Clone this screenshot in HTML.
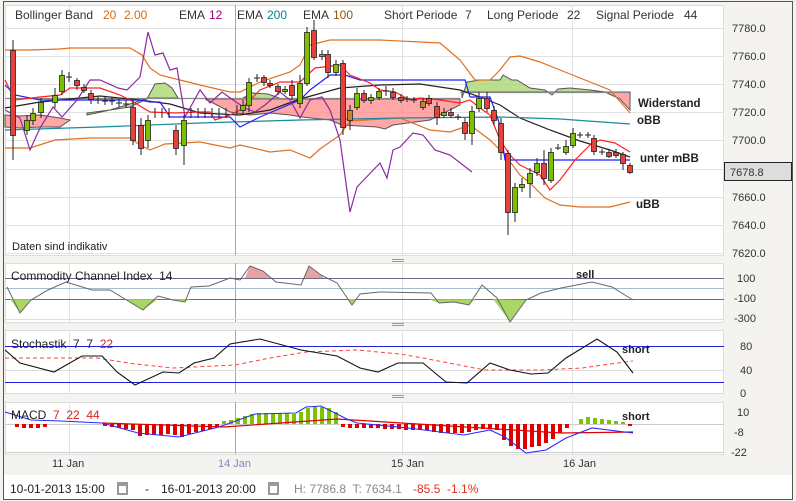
<!DOCTYPE html>
<html><head><meta charset="utf-8"><style>
html,body{margin:0;padding:0;background:#f4f3ef;}
svg{display:block;font-family:"Liberation Sans",sans-serif;}
text{white-space:pre;}
</style></head><body>
<svg width="796" height="501" viewBox="0 0 796 501" xmlns="http://www.w3.org/2000/svg">
<rect x="0" y="0" width="796" height="501" fill="#f4f3ef"/>
<rect x="3.5" y="1.5" width="789" height="498" fill="none" stroke="#555"/>
<rect x="5.5" y="5.5" width="718" height="250" fill="#fff" stroke="#ddd"/>
<rect x="5.5" y="263.5" width="718" height="59" fill="#fff" stroke="#ddd"/>
<rect x="5.5" y="330.5" width="718" height="63" fill="#fff" stroke="#ddd"/>
<rect x="5.5" y="402.5" width="718" height="52" fill="#fff" stroke="#ddd"/>
<g stroke="#999" stroke-width="1">
<path d="M392 259.5h12M392 261.5h12M392 323.5h12M392 325.5h12M392 395.5h12M392 397.5h12"/>
</g>
<g stroke="#e2e2e2" stroke-width="1">
<path d="M5 28.5H724M5 56.5H724M5 84.5H724M5 112.5H724M5 140.5H724M5 169.5H724M5 197.5H724M5 225.5H724M5 253.5H724"/>
<path d="M69.5 5V255M402.5 5V255M572.5 5V255M69.5 263V322M402.5 263V322M572.5 263V322M69.5 330V393M402.5 330V393M572.5 330V393M69.5 402V454M402.5 402V454M572.5 402V454"/>
</g>
<path d="M235.5 5V255M235.5 263V322M235.5 330V393M235.5 402V454" stroke="#9aa3d6"/>
<g font-size="12" fill="#333">
<text x="15" y="19">Bollinger Band</text><text x="103" y="19" fill="#d26a10">20</text><text x="124" y="19" fill="#d26a10">2.00</text>
<text x="179" y="19">EMA</text><text x="209" y="19" fill="#a0006e">12</text>
<text x="237" y="19">EMA</text><text x="267" y="19" fill="#00808a">200</text>
<text x="303" y="19">EMA</text><text x="333" y="19" fill="#8a5a10">100</text>
<text x="384" y="19">Short Periode</text><text x="465" y="19">7</text>
<text x="487" y="19">Long Periode</text><text x="567" y="19">22</text>
<text x="596" y="19">Signal Periode</text><text x="684" y="19">44</text>
</g>
<g font-size="11" fill="#333">
<text x="732" y="32">7780.0</text><text x="732" y="60">7760.0</text><text x="732" y="88">7740.0</text><text x="732" y="116">7720.0</text><text x="732" y="144">7700.0</text><text x="732" y="201">7660.0</text><text x="732" y="229">7640.0</text><text x="732" y="257">7620.0</text>
</g>
<rect x="724.5" y="162.5" width="67" height="18" fill="#ddd" stroke="#222"/>
<text x="730" y="176" font-size="11" fill="#333">7678.8</text>
<g fill-opacity="0.75" stroke="#555" stroke-width="1">
<polygon fill="#ff8a8a" points="5,115 20,116 40,115 60,118 70,120 60,127 40,127 20,128 5,127"/>
<polygon fill="#a6d46a" points="87,113 110,110 130,107 147,99 155,84 165,83 172,88 178,98 147,98 130,104 110,110 87,115"/>
<polygon fill="#a6d46a" points="243,98 252,93 268,94 282,99"/>
<polygon fill="#ff8a8a" points="205,99 460,99 460,105 430,120 393,125 385,129 377,127 342,125 330,120 302,117 290,115 270,113 250,115 230,112 215,104"/>
<polygon fill="#a6d46a" points="462,98 467,82 480,80 500,80 503,75 512,80 517,80 530,88 545,90 552,95 558,89 570,88 590,90 605,92 462,92"/>
<polygon fill="#ff8a8a" points="605,92 630,92 630,110 620,99"/>
</g>
<path d="M5 98.5H460M460 92.5H631" stroke="#888" stroke-width="1.3" fill="none"/>
<g fill="none" stroke-width="1.2">
<polyline stroke="#e07020" points="5,50 30,50 60,49 70,48 130,48 142,55 150,68 160,75 180,80 200,85 230,92 240,92 260,82 290,72 300,65 310,45 330,40 380,40 440,43 460,60 475,80 490,80 500,70 510,57 520,56 540,62 560,70 590,82 610,90 630,113"/>
<polyline stroke="#e07020" points="5,148 30,148 55,140 90,138 130,138 140,145 150,150 165,144 200,142 230,148 240,145 270,152 290,150 310,158 320,149 340,135 350,121 400,118 430,130 450,132 470,125 490,140 505,155 520,175 530,183 545,198 560,205 580,207 610,207 630,202"/>
<polyline stroke="#222" points="5,108 40,102 100,96 140,100 170,104 200,113 240,115 270,110 300,99 340,88 380,85 420,84 460,90 480,97 500,105 520,118 550,130 580,141 610,150 630,157"/>
<polyline stroke="#1a8a9a" points="5,130 100,127 200,123 300,120 400,118 500,117 560,119 630,124"/>
<polyline stroke="#1f1fff" points="5,85 15,95 40,100 140,100 150,102 160,102 170,117 230,117 240,127 260,117 300,100 310,90 330,75 345,75 360,80 465,80 470,97 490,97 500,125 505,160 630,160"/>
<polyline stroke="#ff2020" points="5,80 15,100 40,97 60,95 70,88 100,88 120,95 130,100 150,112 175,113 200,112 210,112 215,120 230,115 240,110 260,90 280,82 300,82 315,68 340,65 350,75 370,83 380,90 395,92 410,100 420,98 440,100 460,103 470,100 480,108 490,115 500,140 510,155 520,165 530,170 540,175 550,190 560,180 575,160 590,145 600,140 615,143 630,152"/>
<polyline stroke="#8a2aa0" points="5,110 20,118 30,150 40,128 53,107 62,117 77,100 90,80 100,80 118,88 127,90 140,77 148,32 155,55 163,53 170,70 177,68 185,117 200,90 210,103 222,92 233,100 245,108 255,112 265,105 280,92 290,100 300,118 310,100 322,97 330,110 340,140 350,212 357,187 380,163 387,178 393,150 400,147 413,133 423,135 435,150 450,155 472,172"/>
</g>
<g stroke="#222" stroke-width="1">
<path d="M13 40V160M27 115V135M33 108V125M41 98V118M55 88V108M62 70V95M69 72V82M77 78V90M84 84V93M91 90V104M98 97V104M105 97V105M112 97V105M119 99V107M126 100V108M133 100V145M141 118V155M148 115V148M155 108V118M162 108V118M169 108V118M176 125V155M184 115V165M191 108V118M198 108V118M205 108V118M212 108V118M219 108V118M226 108V118M237 105V115M243 100V114M249 78V112M257 74V82M264 75V86M270 80V88M278 84V95M285 86V94M292 80V100M300 75V108M307 27V86M314 20V60M322 50V60M328 50V78M336 60V76M343 60V135M350 105V130M357 88V110M364 90V103M371 94V104M379 88V100M386 86V96M393 88V100M401 94V103M407 96V102M414 97V103M423 98V110M429 95V106M437 102V125M444 108V118M451 108V118M458 114V120M465 118V140M472 106V145M479 92V112M487 92V112M494 106V125M501 118V160M508 150V235M515 183V222M522 178V192M530 168V198M537 158V176M544 150V185M551 148V183M558 144V150M566 140V155M573 128V148M580 132V138M588 132V138M594 135V155M602 149V155M609 149V158M616 149V158M623 152V170M630 163V174"/>
<path d="M66 77h6M95 100h6M102 101h6M109 101h6M116 103h6M123 104h6M254 78h6M383 91h6M404 99h6M411 100h6M455 117h6M555 148h6M577 135h6M585 135h6M599 152h6"/>
</g>
<g stroke="#222" stroke-width="0.8">
<g fill="#e8413c">
<rect x="10.5" y="50.5" width="5" height="85"/><rect x="74.5" y="80.5" width="5" height="5"/><rect x="81.5" y="87.5" width="5" height="3"/><rect x="88.5" y="93.5" width="5" height="6"/><rect x="130.5" y="107.5" width="5" height="33"/><rect x="138.5" y="125.5" width="5" height="23"/><rect x="173.5" y="130.5" width="5" height="18"/><rect x="261.5" y="77.5" width="5" height="5"/><rect x="267.5" y="83.5" width="5" height="2"/><rect x="275.5" y="86.5" width="5" height="5"/><rect x="289.5" y="85.5" width="5" height="10"/><rect x="311.5" y="30.5" width="5" height="27"/><rect x="325.5" y="54.5" width="5" height="18"/><rect x="340.5" y="63.5" width="5" height="64"/><rect x="361.5" y="93.5" width="5" height="7"/><rect x="390.5" y="92.5" width="5" height="5"/><rect x="398.5" y="97.5" width="5" height="3"/><rect x="426.5" y="98.5" width="5" height="5"/><rect x="434.5" y="106.5" width="5" height="11"/><rect x="448.5" y="112.5" width="5" height="3"/><rect x="462.5" y="122.5" width="5" height="11"/><rect x="484.5" y="98.5" width="5" height="10"/><rect x="491.5" y="110.5" width="5" height="10"/><rect x="498.5" y="123.5" width="5" height="29"/><rect x="505.5" y="153.5" width="5" height="59"/><rect x="541.5" y="163.5" width="5" height="15"/><rect x="591.5" y="138.5" width="5" height="13"/><rect x="606.5" y="152.5" width="5" height="4"/><rect x="613.5" y="152.5" width="5" height="3"/><rect x="620.5" y="154.5" width="5" height="9"/><rect x="627.5" y="165.5" width="5" height="7"/>
</g>
<g fill="#7cc000">
<rect x="24.5" y="120.5" width="5" height="10"/><rect x="30.5" y="113.5" width="5" height="7"/><rect x="38.5" y="102.5" width="5" height="10"/><rect x="52.5" y="95.5" width="5" height="7"/><rect x="59.5" y="75.5" width="5" height="16"/><rect x="145.5" y="120.5" width="5" height="20"/><rect x="181.5" y="120.5" width="5" height="25"/><rect x="240.5" y="105.5" width="5" height="5"/><rect x="246.5" y="82.5" width="5" height="23"/><rect x="282.5" y="89.5" width="5" height="2"/><rect x="297.5" y="83.5" width="5" height="20"/><rect x="304.5" y="32.5" width="5" height="51"/><rect x="319.5" y="54.5" width="5" height="2"/><rect x="333.5" y="64.5" width="5" height="8"/><rect x="354.5" y="93.5" width="5" height="14"/><rect x="368.5" y="97.5" width="5" height="3"/><rect x="376.5" y="91.5" width="5" height="6"/><rect x="441.5" y="112.5" width="5" height="3"/><rect x="469.5" y="111.5" width="5" height="22"/><rect x="476.5" y="98.5" width="5" height="10"/><rect x="512.5" y="187.5" width="5" height="25"/><rect x="519.5" y="184.5" width="5" height="3"/><rect x="527.5" y="173.5" width="5" height="10"/><rect x="534.5" y="163.5" width="5" height="9"/><rect x="548.5" y="152.5" width="5" height="28"/><rect x="563.5" y="146.5" width="5" height="6"/><rect x="570.5" y="133.5" width="5" height="12"/>
</g>
<g fill="#c8832c"><rect x="347.5" y="110.5" width="5" height="10"/><rect x="420.5" y="101.5" width="5" height="6"/></g>
</g>
<g font-size="11.5" font-weight="bold" fill="#222">
<text x="638" y="107">Widerstand</text><text x="637" y="124">oBB</text><text x="640" y="162">unter mBB</text><text x="636" y="208">uBB</text>
</g>
<text x="12" y="250" font-size="11" fill="#222">Daten sind indikativ</text>
<path d="M5 278.5H724M5 299.5H724" stroke="#6a6a88"/><path d="M5 288.5H724" stroke="#a8bcd0"/><path d="M5 319.5H724" stroke="#ddd"/>
<g fill="#9ad04a" fill-opacity="0.85"><polygon points="10,299 20,313 31,299"/><polygon points="125,299 143,310 158,299"/><polygon points="163,299 173,300 185,302 190,299"/><polygon points="347,299 352,305 357,299"/><polygon points="428,299 439,303 454,302 469,305 475,299"/><polygon points="493,299 510,322 526,300"/></g>
<g fill="#e07a7a" fill-opacity="0.7"><polygon points="245,278 250,266 263,271 270,278"/><polygon points="304,278 309,266 321,275 324,278"/></g>
<polyline fill="none" stroke="#666" stroke-width="1" points="7,287 20,313 31,300 48,290 66,282 92,290 110,290 143,310 158,296 173,300 185,302 191,287 209,286 230,278 240,280 250,266 263,271 276,282 301,285 309,266 321,275 337,283 352,305 360,294 380,292 431,293 439,303 454,302 469,305 482,285 497,298 510,322 526,300 541,293 561,288 592,282 612,287 633,300"/>
<text x="11" y="280" font-size="12" fill="#222">Commodity Channel Index  14</text>
<text x="576" y="278" font-size="11" font-weight="bold" fill="#222">sell</text>
<g font-size="11" fill="#333"><text x="737" y="282">100</text><text x="734" y="302">-100</text><text x="734" y="322">-300</text></g>
<path d="M5 346.5H724M5 382.5H724" stroke="#2020e0"/><path d="M5 370.5H724" stroke="#ddd"/>
<polyline fill="none" stroke="#ff4040" stroke-dasharray="4,3" points="5,358 97,358 135,364 173,368 235,365 270,358 306,352 357,350 400,354 423,358 485,370 540,370 582,368 610,364 633,361"/>
<polyline fill="none" stroke="#111" stroke-width="1.1" points="5,350 20,363 54,372 82,356 102,356 117,372 135,385 163,372 179,373 194,363 214,358 230,344 260,339 301,350 337,356 360,368 378,372 398,363 423,363 446,382 467,383 490,363 510,370 531,374 548,373 566,358 597,339 617,352 633,373"/>
<text x="11" y="348" font-size="12" fill="#222">Stochastik  7  7  <tspan fill="#e02020">22</tspan></text>
<text x="622" y="353" font-size="11" font-weight="bold" fill="#222">short</text>
<g font-size="11" fill="#333"><text x="740" y="350">80</text><text x="740" y="374">40</text><text x="740" y="397">0</text></g>
<path d="M5 424.5H724M5 452.5H724" stroke="#ccc"/>
<path stroke="#e00000" stroke-width="4" d="M17 424V427M24 424V428M31 424V428M38 424V428M45 424V427M105 424V426M112 424V427M119 424V428M126 424V429M133 424V430M140 424V436M147 424V435M154 424V435M161 424V435M168 424V434M175 424V435M182 424V437M189 424V434M196 424V432M203 424V431M210 424V429M217 424V427M343 424V427M350 424V428M357 424V428M364 424V428M371 424V428M378 424V428M385 424V429M392 424V429M399 424V429M406 424V430M413 424V430M420 424V430M427 424V430M434 424V432M441 424V433M448 424V433M455 424V433M462 424V433M469 424V432M476 424V430M483 424V429M490 424V429M497 424V430M504 424V440M511 424V446M518 424V449M525 424V449M532 424V447M539 424V446M546 424V443M553 424V439M560 424V433M567 424V428M630 424V426"/>
<path stroke="#7cc400" stroke-width="4" d="M224 424V421M231 424V420M238 424V418M245 424V416M252 424V414M259 424V413M266 424V413M273 424V413M280 424V413M287 424V413M294 424V414M301 424V412M308 424V408M315 424V406M322 424V407M329 424V408M336 424V412M581 424V419M588 424V417M595 424V418M602 424V419M609 424V420M616 424V421M623 424V422"/>
<polyline fill="none" stroke="#e00000" stroke-width="1.2" points="102,423 224,427 337,419 434,425 561,433 633,432"/>
<polyline fill="none" stroke="#2a2aff" stroke-width="1.1" points="5,412 31,420 61,421 102,423 138,433 179,437 219,427 255,414 296,413 306,407 321,406 347,419 357,423 408,428 464,435 490,430 505,437 526,453 546,450 566,438 592,428 633,433"/>
<text x="11" y="419" font-size="12" fill="#222">MACD  <tspan fill="#e02020">7  22  44</tspan></text>
<text x="622" y="420" font-size="11" font-weight="bold" fill="#222">short</text>
<g font-size="11" fill="#333"><text x="737" y="416">10</text><text x="734" y="436">-8</text><text x="731" y="456">-22</text></g>
<g font-size="11" fill="#333"><text x="52" y="467">11 Jan</text><text x="218" y="467" fill="#7a8ac8">14 Jan</text><text x="391" y="467">15 Jan</text><text x="563" y="467">16 Jan</text></g>
<rect x="4" y="475" width="788" height="24" fill="#fff"/>
<g font-size="12">
<text x="10" y="493" fill="#222">10-01-2013 15:00</text>
<rect x="117" y="482" width="11" height="13" fill="#999"/><rect x="119" y="486" width="7" height="7" fill="#fff"/>
<text x="145" y="493" fill="#222">-</text>
<text x="161" y="493" fill="#222">16-01-2013 20:00</text>
<rect x="268" y="482" width="11" height="13" fill="#999"/><rect x="270" y="486" width="7" height="7" fill="#fff"/>
<text x="294" y="493" fill="#888">H: 7786.8  T: 7634.1</text>
<text x="413" y="493" fill="#e03020">-85.5  -1.1%</text>
</g>
</svg>
</body></html>
